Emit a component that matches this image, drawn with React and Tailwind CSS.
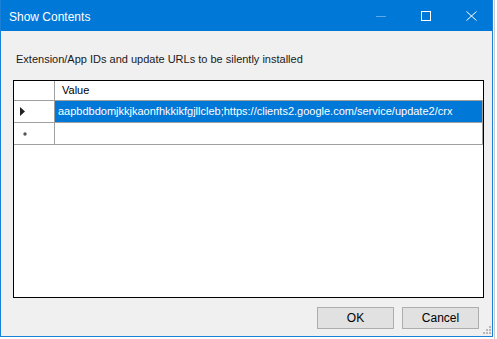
import React from "react";

const font = { fontFamily: '"Liberation Sans", Arial, sans-serif' };

function CaptionButtons() {
  return (
    <div className="flex items-center gap-[35px] pr-[15px]">
      <svg width="10" height="10" viewBox="0 0 10 10">
        <line x1="0" y1="5.5" x2="10" y2="5.5" stroke="#5fa8e6" strokeWidth="1" />
      </svg>
      <svg width="10" height="10" viewBox="0 0 10 10">
        <rect x="0.5" y="0.5" width="9" height="9" fill="none" stroke="#fff" strokeWidth="1" />
      </svg>
      <svg width="11" height="10" viewBox="0 0 11 10">
        <path d="M0.5 0.5 L10.5 9.5 M10.5 0.5 L0.5 9.5" stroke="#fff" strokeWidth="1" />
      </svg>
    </div>
  );
}

function SizeGrip() {
  const dots = [
    [6, 0],
    [3, 3], [6, 3],
    [0, 6], [3, 6], [6, 6],
  ];
  return (
    <svg width="8" height="8" viewBox="0 0 8 8" className="absolute right-[1px] bottom-[2px]">
      {dots.map(([x, y], i) => (
        <rect key={i} x={x} y={y} width="2" height="2" fill="#b8b8b8" />
      ))}
    </svg>
  );
}

export default function App() {
  return (
    <div className="w-[497px] h-[339px] bg-white flex overflow-hidden text-black" style={font}>
      <div className="relative w-[493px] h-[337px] shrink-0 border border-[#1a7fd6] bg-[#f0f0f0] flex flex-col">
        {/* title bar */}
        <div className="h-[31px] -mt-[1px] bg-[#0078d7] flex items-center justify-between">
          <span className="pl-[8px] pt-[2px] text-[12px] text-white">Show Contents</span>
          <CaptionButtons />
        </div>

        <div className="ml-[15px] mt-[20px] text-[11px] leading-[16px] text-[#1a1a1a]">
          Extension/App IDs and update URLs to be silently installed
        </div>

        {/* grid */}
        <div className="ml-[12px] mt-[13px] w-[471px] h-[218px] border border-black bg-white flex flex-col text-[11px]">
          <div className="flex h-[20px] border-b border-[#a0a0a0]">
            <div className="w-[41px] border-r border-[#a0a0a0]" />
            <div className="flex-1 pl-[7px] flex items-center">Value</div>
          </div>
          <div className="flex h-[22px] border-b border-[#a0a0a0]">
            <div className="w-[41px] border-r border-[#a0a0a0] flex items-center pl-[6px]">
              <svg width="5" height="9" viewBox="0 0 5 9">
                <path d="M0 0 L5 4.5 L0 9 Z" fill="#222" />
              </svg>
            </div>
            <div className="flex-1 bg-[#0078d7] text-white pl-[3px] flex items-center border-r border-[#a0a0a0]">
              aapbdbdomjkkjkaonfhkkikfgjllcleb;https://clients2.google.com/service/update2/crx
            </div>
          </div>
          <div className="flex h-[22px] border-b border-[#a0a0a0]">
            <div className="w-[41px] border-r border-[#a0a0a0] flex items-center pl-[9px]">
              <svg width="4" height="4" viewBox="0 0 4 4">
                <circle cx="2" cy="2" r="1.7" fill="#555" />
              </svg>
            </div>
            <div className="flex-1 border-r border-[#a0a0a0]" />
          </div>
        </div>

        {/* buttons */}
        <div className="mt-[9px] flex justify-end gap-[8px] pr-[13px] text-[12px]">
          <button className="w-[77px] h-[22px] bg-[#e1e1e1] border border-[#adadad] flex items-center justify-center">
            OK
          </button>
          <button className="w-[77px] h-[22px] bg-[#e1e1e1] border border-[#adadad] flex items-center justify-center">
            Cancel
          </button>
        </div>

        <SizeGrip />
      </div>
      <div className="flex-1 flex">
        <div className="w-[1px] ml-[1px] h-full bg-[#c8c8c8]" />
      </div>
    </div>
  );
}
